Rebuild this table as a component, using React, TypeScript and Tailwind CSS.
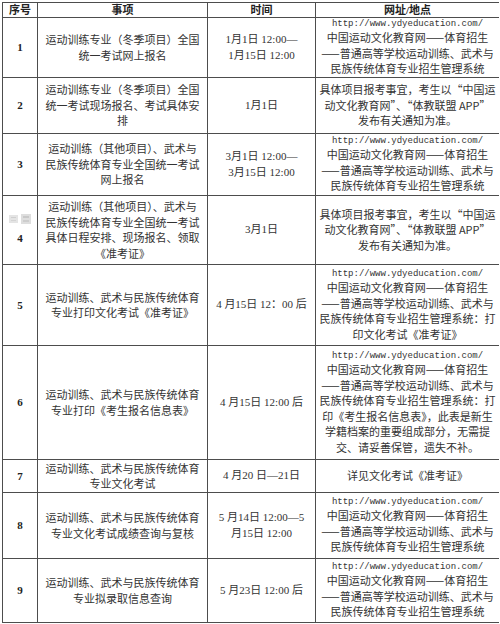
import React from "react";

const SITE = "http://www.ydyeducation.com/";

const SYSTEM = [
  "中国运动文化教育网——体育招生",
  "——普通高等学校运动训练、武术与",
  "民族传统体育专业招生管理系统",
];

const NOTICE = [
  "具体项目报考事宜，考生以“中国运",
  "动文化教育网”、“体教联盟 APP”",
  "发布有关通知为准。",
];

interface Row {
  no: string;
  item: string[];
  time: string[];
  place: string[];
  url?: boolean;
  mark?: boolean;
}

const rows: Row[] = [
  {
    no: "1",
    item: ["运动训练专业（冬季项目）全国", "统一考试网上报名"],
    time: ["1月1日 12:00—", "1月15日 12:00"],
    place: SYSTEM,
    url: true,
  },
  {
    no: "2",
    item: ["运动训练专业（冬季项目）全国", "统一考试现场报名、考试具体安", "排"],
    time: ["1月1日"],
    place: NOTICE,
  },
  {
    no: "3",
    item: ["运动训练（其他项目）、武术与", "民族传统体育专业全国统一考试", "网上报名"],
    time: ["3月1日 12:00—", "3月15日 12:00"],
    place: SYSTEM,
    url: true,
  },
  {
    no: "4",
    item: [
      "运动训练（其他项目）、武术与",
      "民族传统体育专业全国统一考试",
      "具体日程安排、现场报名、领取",
      "《准考证》",
    ],
    time: ["3月1日"],
    place: NOTICE,
    mark: true,
  },
  {
    no: "5",
    item: ["运动训练、武术与民族传统体育", "专业打印文化考试《准考证》"],
    time: ["4 月15日 12：00 后"],
    place: [
      "中国运动文化教育网——体育招生",
      "——普通高等学校运动训练、武术与",
      "民族传统体育专业招生管理系统：打",
      "印文化考试《准考证》",
    ],
    url: true,
  },
  {
    no: "6",
    item: ["运动训练、武术与民族传统体育", "专业打印《考生报名信息表》"],
    time: ["4 月15日 12:00 后"],
    place: [
      "中国运动文化教育网——体育招生",
      "——普通高等学校运动训练、武术与",
      "民族传统体育专业招生管理系统：打",
      "印《考生报名信息表》，此表是新生",
      "学籍档案的重要组成部分，无需提",
      "交、请妥善保管，遗失不补。",
    ],
    url: true,
  },
  {
    no: "7",
    item: ["运动训练、武术与民族传统体育", "专业文化考试"],
    time: ["4 月20 日—21日"],
    place: ["详见文化考试《准考证》"],
  },
  {
    no: "8",
    item: ["运动训练、武术与民族传统体育", "专业文化考试成绩查询与复核"],
    time: ["5 月14日 12:00—5", "月15日 12:00"],
    place: SYSTEM,
    url: true,
  },
  {
    no: "9",
    item: ["运动训练、武术与民族传统体育", "专业拟录取信息查询"],
    time: ["5 月23日 12:00 后"],
    place: SYSTEM,
    url: true,
  },
];

function Lines({ lines, cjk }: { lines: string[]; cjk?: boolean }) {
  return (
    <div
      className={`flex flex-col items-center whitespace-nowrap leading-[15.5px] ${
        cjk ? "[font-family:'Noto_Sans_CJK_SC','Liberation_Serif',sans-serif]" : ""
      }`}
    >
      {lines.map((l, i) => (
        <span key={i}>{l}</span>
      ))}
    </div>
  );
}

// faint scanned stamp in row 4
function Mark() {
  return (
    <svg width="22" height="10" viewBox="0 0 22 10">
      <rect x="0" y="1" width="9" height="8" fill="#e4e4e4" />
      <rect x="2" y="3" width="5" height="1" fill="#cfcfcf" />
      <rect x="2" y="6" width="5" height="1" fill="#d4d4d4" />
      <rect x="12" y="0" width="10" height="10" fill="#dedede" />
      <rect x="14" y="2" width="6" height="2" fill="#c8c8c8" />
      <rect x="14" y="6" width="6" height="2" fill="#cdcdcd" />
    </svg>
  );
}

const cell = "bg-white flex items-center justify-center text-center overflow-visible";

export default function App() {
  return (
    <div className="w-[500px] h-[624px] bg-white pt-[2px] pl-[2px] text-[11px] text-[#333] [font-family:'Liberation_Serif','Noto_Sans_CJK_SC',serif]">
      <div className="grid w-[497px] grid-cols-[34px_169px_107px_183px] grid-rows-[14px_59px_55px_61px_68px_80px_113px_32px_65px_63px] gap-px bg-[#4d4d4d] p-px">
        {/* 表头 */}
        <div className={`${cell} font-bold text-[#222]`}>序号</div>
        <div className={`${cell} font-bold text-[#222]`}>事项</div>
        <div className={`${cell} font-bold text-[#222]`}>时间</div>
        <div className={`${cell} font-bold text-[#222]`}>网址/地点</div>

        {rows.map((r) => (
          <React.Fragment key={r.no}>
            <div className={`${cell} flex-col gap-[6px] font-bold text-[#222]`}>
              {r.mark && <Mark />}
              <span>{r.no}</span>
            </div>
            <div className={cell}>
              <Lines lines={r.item} cjk />
            </div>
            <div className={cell}>
              <Lines lines={r.time} />
            </div>
            <div className={`${cell} flex-col`}>
              {r.url && (
                <span className="leading-[12px] text-[9px] whitespace-nowrap [font-family:'Liberation_Mono',monospace]">
                  {SITE}
                </span>
              )}
              <Lines lines={r.place} cjk />
            </div>
          </React.Fragment>
        ))}
      </div>
    </div>
  );
}
